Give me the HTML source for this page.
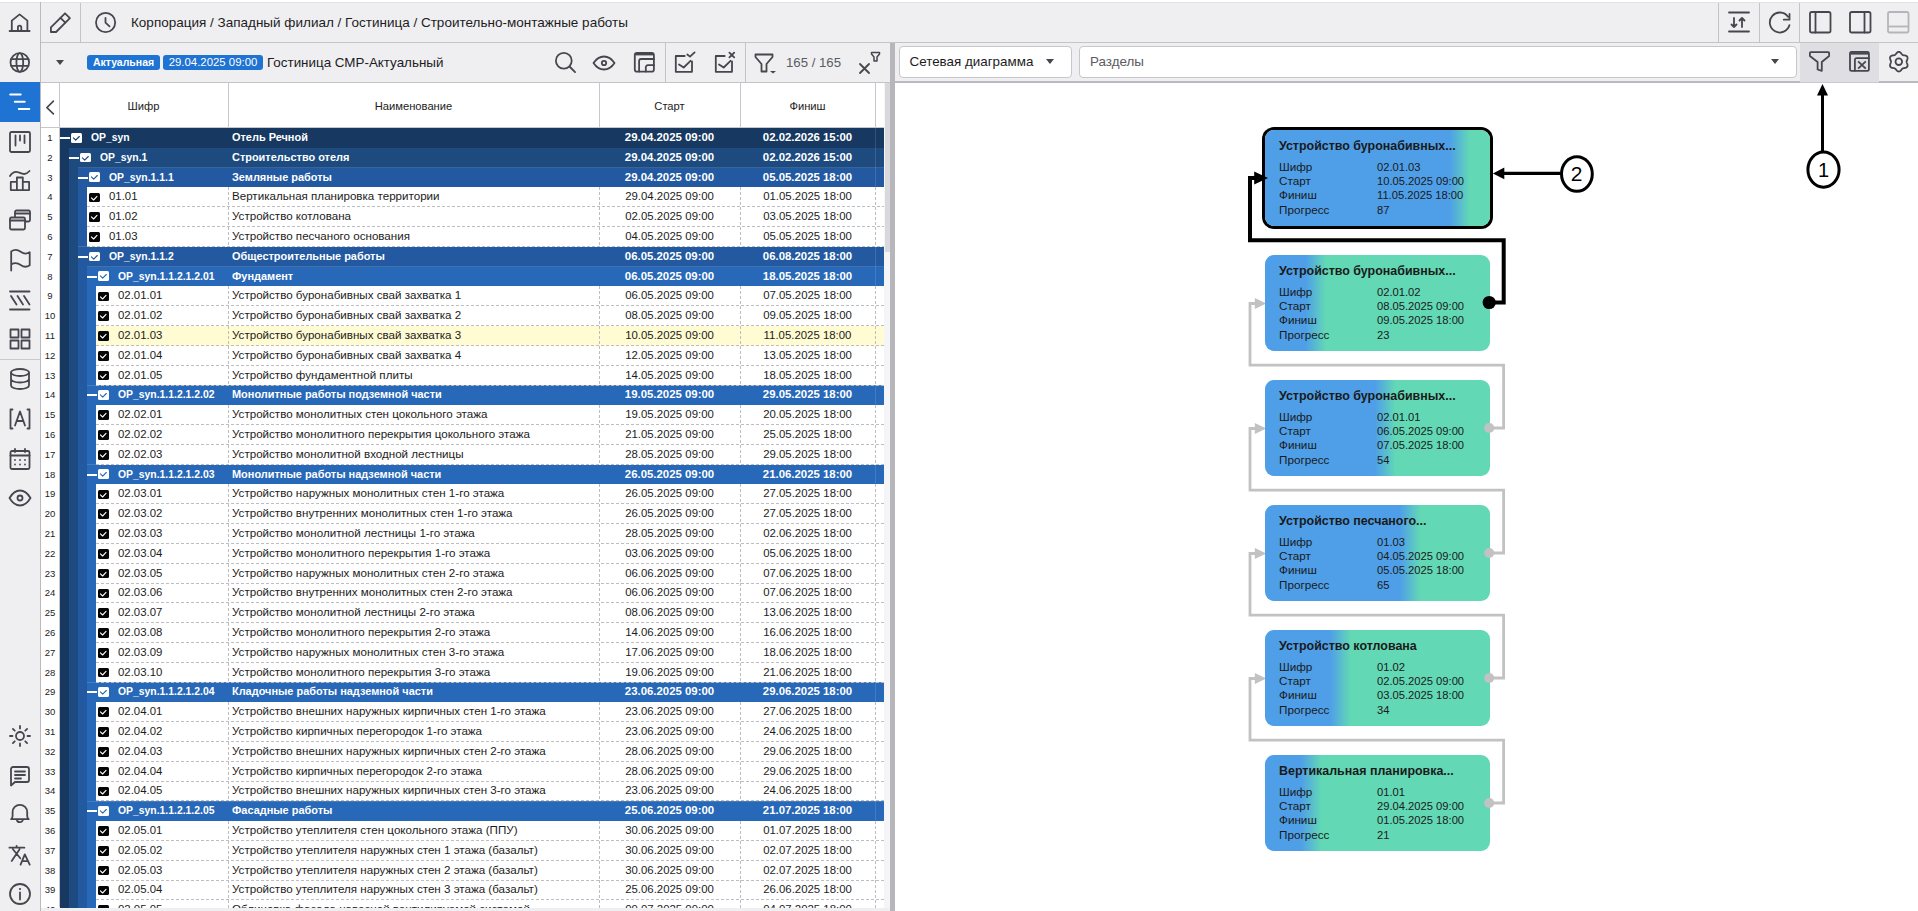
<!DOCTYPE html>
<html><head><meta charset="utf-8"><style>
*{box-sizing:border-box;margin:0;padding:0}
html,body{width:1918px;height:911px;overflow:hidden;background:#efeff2;font-family:"Liberation Sans",sans-serif;color:#1c1c22}
.a{position:absolute}
.si{position:absolute;left:7px;width:26px;height:26px}
.si svg{display:block}
.row{position:absolute;left:41px;width:843px;height:19.8px;white-space:nowrap;font-size:11.4px;line-height:19.8px}
.num{position:absolute;left:0;width:18px;height:100%;text-align:center;font-size:9.5px;color:#1c1c22;background:#fff}
.bar{position:absolute;top:0;height:100%}
.c{position:absolute;top:0;height:100%;overflow:hidden}
.g{color:#fff;font-weight:bold}
.dash-h{position:absolute;height:1px;background:repeating-linear-gradient(90deg,#bdbdc2 0 3px,transparent 3px 5px)}
.dash-v{position:absolute;width:1px;background:repeating-linear-gradient(180deg,#bdbdc2 0 3px,transparent 3px 5px)}
.cb{position:absolute;width:10.8px;height:9.8px;border-radius:1.5px}
.cb svg,.a svg{display:block}
.node{position:absolute;width:225px;height:96px;border-radius:9px;font-size:11.2px;color:#1a1a1a}
.node .t{position:absolute;left:14.5px;top:8.5px;font-weight:bold;font-size:12.45px;white-space:nowrap}
.node .k{position:absolute;left:14.5px;white-space:nowrap;font-size:11.7px;line-height:14px}
.node .v{position:absolute;left:112.5px;white-space:nowrap;line-height:14px}
</style></head><body>

<div class="a" style="left:0;top:0;width:1918px;height:2px;background:#fff"></div>
<div class="a" style="left:0;top:2px;width:1918px;height:1px;background:#e3e3e6"></div>
<div class="a" style="left:40px;top:2px;width:1px;height:909px;background:#b9b9be"></div>
<div class="a" style="left:0;top:82px;width:40px;height:40px;background:#1e73d3"></div>
<div class="a" style="left:0;top:359px;width:40px;height:1px;background:#c9c9ce"></div>
<div class="si" style="top:9px"><svg width="26" height="26" viewBox="0 0 26 26" ><path d="M2.6 22H22.6M4.8 22V11.6L12.6 5.4L20.4 11.6V22M10.9 22V18.3a1.7 1.7 0 0 1 3.4 0V22" fill="none" stroke="#46464e" stroke-width="1.8" stroke-linecap="round" stroke-linejoin="round"/></svg></div>
<div class="si" style="top:49px"><svg width="26" height="26" viewBox="0 0 26 26" ><circle cx="12.8" cy="13.5" r="9.3" fill="none" stroke="#46464e" stroke-width="1.8" stroke-linecap="round" stroke-linejoin="round"/><ellipse cx="12.8" cy="13.5" rx="3.4" ry="9.3" fill="none" stroke="#46464e" stroke-width="1.8" stroke-linecap="round" stroke-linejoin="round"/><path d="M4.2 10.2H21.4M4.2 16.8H21.4" fill="none" stroke="#46464e" stroke-width="1.8" stroke-linecap="round" stroke-linejoin="round"/></svg></div>
<div class="si" style="top:89px"><svg width="26" height="26" viewBox="0 0 26 26" ><path d="M3.2 5.6H13.7M7.8 12.8H17.7M11.8 20.1H22.3" fill="none" stroke="#ffffff" stroke-width="2" stroke-linecap="round"/></svg></div>
<div class="si" style="top:128.5px"><svg width="26" height="26" viewBox="0 0 26 26" ><rect x="3" y="3" width="20" height="20" rx="1.5" fill="none" stroke="#46464e" stroke-width="1.8" stroke-linecap="round" stroke-linejoin="round"/><path d="M8.5 6.5v10M13 6.5v5M17.5 6.5v7.5" fill="none" stroke="#46464e" stroke-width="1.8" stroke-linecap="round" stroke-linejoin="round"/></svg></div>
<div class="si" style="top:168px"><svg width="26" height="26" viewBox="0 0 26 26" ><path d="M3 8C5.5 4 8.5 3 12 4.5S18.5 7.5 22.5 3" fill="none" stroke="#46464e" stroke-width="1.8" stroke-linecap="round" stroke-linejoin="round"/><path d="M3.8 22.1V13.9h6.1v8.2zM9.9 22.1V9.5h5.9v12.6zM15.8 22.1V13.9h6.3v8.2z" fill="none" stroke="#46464e" stroke-width="1.8" stroke-linecap="round" stroke-linejoin="round"/></svg></div>
<div class="si" style="top:207px"><svg width="26" height="26" viewBox="0 0 26 26" ><rect x="8" y="3.5" width="15" height="11" rx="1.5" fill="none" stroke="#46464e" stroke-width="1.8" stroke-linecap="round" stroke-linejoin="round"/><path d="M8 6.5h15" fill="none" stroke="#46464e" stroke-width="1.8" stroke-linecap="round" stroke-linejoin="round"/><rect x="3" y="10.5" width="15" height="12" rx="1.5" fill="#efeff2" stroke="#46464e" stroke-width="1.8"/><path d="M3 13.5h15" fill="none" stroke="#46464e" stroke-width="1.8" stroke-linecap="round" stroke-linejoin="round"/></svg></div>
<div class="si" style="top:247px"><svg width="26" height="26" viewBox="0 0 26 26" ><path d="M4.2 23.5V4.5c3.5-2.5 7-1.5 9.5 0.3s6 2.5 9 0.5v13c-3 2-6.5 1.5-9-0.3S7.5 15.5 4.2 17.5" fill="none" stroke="#46464e" stroke-width="1.8" stroke-linecap="round" stroke-linejoin="round"/></svg></div>
<div class="si" style="top:286.5px"><svg width="26" height="26" viewBox="0 0 26 26" ><path d="M3 4.5h19.5M3 22.5h19.5M4 9l5.5 8.5M10.5 9l5.5 8.5M17 9l5.5 8.5" fill="none" stroke="#46464e" stroke-width="1.8" stroke-linecap="round" stroke-linejoin="round"/></svg></div>
<div class="si" style="top:326px"><svg width="26" height="26" viewBox="0 0 26 26" ><path d="M3.5 3.5h8v8h-8zM14.5 3.5h8v8h-8zM3.5 14.5h8v8h-8zM14.5 14.5h8v8h-8z" fill="none" stroke="#46464e" stroke-width="1.8" stroke-linecap="round" stroke-linejoin="round"/></svg></div>
<div class="si" style="top:366px"><svg width="26" height="26" viewBox="0 0 26 26" ><ellipse cx="13" cy="6.5" rx="9" ry="3.5" fill="none" stroke="#46464e" stroke-width="1.8" stroke-linecap="round" stroke-linejoin="round"/><path d="M4 6.5v13c0 2 4 3.5 9 3.5s9-1.5 9-3.5v-13M4 13c0 2 4 3.5 9 3.5s9-1.5 9-3.5" fill="none" stroke="#46464e" stroke-width="1.8" stroke-linecap="round" stroke-linejoin="round"/></svg></div>
<div class="si" style="top:406px"><svg width="26" height="26" viewBox="0 0 26 26" ><path d="M5.5 3.5h-2v19h2M20.5 3.5h2v19h-2M8 19.5l5-14 5 14M9.5 15h7" fill="none" stroke="#46464e" stroke-width="1.8" stroke-linecap="round" stroke-linejoin="round"/></svg></div>
<div class="si" style="top:445.5px"><svg width="26" height="26" viewBox="0 0 26 26" ><rect x="3.5" y="5" width="19" height="18" rx="1.5" fill="none" stroke="#46464e" stroke-width="1.8" stroke-linecap="round" stroke-linejoin="round"/><path d="M3.5 9.5h19M8 3v3M18 3v3" fill="none" stroke="#46464e" stroke-width="1.8" stroke-linecap="round" stroke-linejoin="round"/><g fill="#46464e"><circle cx="8" cy="14" r="0.9"/><circle cx="13" cy="14" r="0.9"/><circle cx="18" cy="14" r="0.9"/><circle cx="8" cy="18.5" r="0.9"/><circle cx="13" cy="18.5" r="0.9"/><circle cx="18" cy="18.5" r="0.9"/></g></svg></div>
<div class="si" style="top:485px"><svg width="26" height="26" viewBox="0 0 26 26" ><path d="M2.5 13c3-5 6.5-7.5 10.5-7.5s7.5 2.5 10.5 7.5c-3 5-6.5 7.5-10.5 7.5S5.5 18 2.5 13z" fill="none" stroke="#46464e" stroke-width="1.8" stroke-linecap="round" stroke-linejoin="round"/><circle cx="13" cy="13" r="2.5" fill="none" stroke="#46464e" stroke-width="1.8" stroke-linecap="round" stroke-linejoin="round"/></svg></div>
<div class="si" style="top:723px"><svg width="26" height="26" viewBox="0 0 26 26" ><circle cx="13" cy="13" r="4" fill="none" stroke="#46464e" stroke-width="1.8" stroke-linecap="round" stroke-linejoin="round"/><path d="M13 3v2.5M13 20.5V23M3 13h2.5M20.5 13H23M5.9 5.9l1.8 1.8M18.3 18.3l1.8 1.8M5.9 20.1l1.8-1.8M18.3 7.7l1.8-1.8" fill="none" stroke="#46464e" stroke-width="1.8" stroke-linecap="round" stroke-linejoin="round"/></svg></div>
<div class="si" style="top:762.5px"><svg width="26" height="26" viewBox="0 0 26 26" ><path d="M4 22.5V6a2 2 0 0 1 2-2h14a2 2 0 0 1 2 2v11a2 2 0 0 1-2 2H8z" fill="none" stroke="#46464e" stroke-width="1.8" stroke-linecap="round" stroke-linejoin="round"/><path d="M8 8.5h10M8 12h10M8 15.5h6" fill="none" stroke="#46464e" stroke-width="1.8" stroke-linecap="round" stroke-linejoin="round"/></svg></div>
<div class="si" style="top:802px"><svg width="26" height="26" viewBox="0 0 26 26" ><path d="M4.1 17.2H21.7c-1-0.8-1.5-2-1.5-3.5V10.1a7.3 7.3 0 0 0-14.6 0V13.7c0 1.5-0.5 2.7-1.5 3.5zM9.9 17.2a3 3 0 0 0 6 0" fill="none" stroke="#46464e" stroke-width="1.8" stroke-linecap="round" stroke-linejoin="round"/></svg></div>
<div class="si" style="top:841.5px"><svg width="26" height="26" viewBox="0 0 26 26" ><path d="M2.4 5.7H17.4M9.6 3.8V5.7M5.9 7.3L13.3 16.3M12.6 7.3L4.7 18.9M13.6 22.6L17.8 12.4L22.7 22.6M15.1 19.1H21.2" fill="none" stroke="#46464e" stroke-width="1.8" stroke-linecap="round" stroke-linejoin="round"/></svg></div>
<div class="si" style="top:880.5px"><svg width="26" height="26" viewBox="0 0 26 26" ><circle cx="13" cy="13" r="10" fill="none" stroke="#46464e" stroke-width="1.8" stroke-linecap="round" stroke-linejoin="round"/><path d="M13 11.5v7" fill="none" stroke="#46464e" stroke-width="1.8" stroke-linecap="round" stroke-linejoin="round"/><circle cx="13" cy="8" r="1.1" fill="#46464e"/></svg></div>
<div class="a" style="left:41px;top:42px;width:1877px;height:1px;background:#c3c3c8"></div>
<div class="a" style="left:80px;top:3px;width:1px;height:39px;background:#c3c3c8"></div>
<div class="a" style="left:1718px;top:3px;width:1px;height:39px;background:#c3c3c8"></div>
<div class="a" style="left:1759px;top:3px;width:1px;height:39px;background:#c3c3c8"></div>
<div class="a" style="left:1799px;top:3px;width:1px;height:39px;background:#c3c3c8"></div>
<div class="a" style="left:47px;top:9px"><svg width="26" height="26" viewBox="0 0 26 26" ><path d="M3.9 23V18.4L18 4.3L22.9 9.2L9.1 23z" fill="none" stroke="#46464e" stroke-width="1.8" stroke-linejoin="round"/><path d="M13.5 8.8L18.3 13.7" fill="none" stroke="#46464e" stroke-width="1.8" stroke-linecap="round" stroke-linejoin="round"/></svg></div>
<div class="a" style="left:93px;top:9px"><svg width="26" height="26" viewBox="0 0 26 26" ><circle cx="12.6" cy="13.5" r="9.6" fill="none" stroke="#46464e" stroke-width="1.8" stroke-linecap="round" stroke-linejoin="round"/><path d="M12.5 8.9V13.7L16.5 17.4" fill="none" stroke="#46464e" stroke-width="1.8" stroke-linecap="round" stroke-linejoin="round"/></svg></div>
<div class="a" style="left:131px;top:14px;font-size:13.5px;line-height:18px;white-space:nowrap;color:#1c1c22">Корпорация / Западный филиал / Гостиница / Строительно-монтажные работы</div>
<div class="a" style="left:1726px;top:9px"><svg width="26" height="26" viewBox="0 0 26 26" ><path d="M3 3.5h20M3 22.5h20M8 9v9M5.5 15.5L8 18l2.5-2.5M16 18V9M13.5 11.5L16 9l2.5 2.5" fill="none" stroke="#46464e" stroke-width="1.8" stroke-linecap="round" stroke-linejoin="round"/></svg></div>
<div class="a" style="left:1767px;top:9px"><svg width="26" height="26" viewBox="0 0 26 26" ><path d="M22.46 16.1A10 10 0 1 1 21 7.76M22.5 4.9V10.7H16.8" fill="none" stroke="#46464e" stroke-width="1.8" stroke-linecap="round" stroke-linejoin="round"/></svg></div>
<div class="a" style="left:1807px;top:9px"><svg width="26" height="26" viewBox="0 0 26 26" ><rect x="3" y="3" width="20.5" height="20.5" rx="1.8" fill="none" stroke="#46464e" stroke-width="1.8" stroke-linecap="round" stroke-linejoin="round"/><path d="M8.5 3v20.5" fill="none" stroke="#46464e" stroke-width="1.8" stroke-linecap="round" stroke-linejoin="round"/></svg></div>
<div class="a" style="left:1847px;top:9px"><svg width="26" height="26" viewBox="0 0 26 26" ><rect x="3" y="3" width="20.5" height="20.5" rx="1.8" fill="none" stroke="#46464e" stroke-width="1.8" stroke-linecap="round" stroke-linejoin="round"/><path d="M17.5 3v20.5" fill="none" stroke="#46464e" stroke-width="1.8" stroke-linecap="round" stroke-linejoin="round"/></svg></div>
<div class="a" style="left:1885px;top:9px"><svg width="26" height="26" viewBox="0 0 26 26" ><rect x="3" y="3" width="20.5" height="20.5" rx="1.8" fill="none" stroke="#b4b4ba" stroke-width="1.8"/><path d="M3 17.5h20.5" fill="none" stroke="#b4b4ba" stroke-width="1.8"/></svg></div>
<div class="a" style="left:41px;top:82px;width:849px;height:1px;background:#c3c3c8"></div>
<div class="a" style="left:56px;top:60px;width:0;height:0;border-left:4.7px solid transparent;border-right:4.7px solid transparent;border-top:5px solid #46464e"></div>
<div class="a" style="left:87px;top:55px;width:73px;height:15px;border-radius:3px;background:#1e73d3;color:#fff;font-weight:bold;font-size:10.5px;line-height:15px;text-align:center">Актуальная</div>
<div class="a" style="left:163px;top:55px;width:100px;height:15px;border-radius:3px;background:#1e73d3;color:#fff;font-size:11.4px;line-height:15px;text-align:center">29.04.2025 09:00</div>
<div class="a" style="left:267px;top:54px;font-size:13.4px;line-height:18px;white-space:nowrap">Гостиница СМР-Актуальный</div>
<div class="a" style="left:551px;top:49px"><svg width="26" height="26" viewBox="0 0 26 26" ><circle cx="12.8" cy="11.8" r="7.9" fill="none" stroke="#46464e" stroke-width="1.8" stroke-linecap="round" stroke-linejoin="round"/><path d="M18.5 17.5l5.6 5.6" fill="none" stroke="#46464e" stroke-width="1.8" stroke-linecap="round" stroke-linejoin="round"/></svg></div>
<div class="a" style="left:591px;top:50px"><svg width="26" height="26" viewBox="0 0 26 26" ><path d="M2.5 13c3-4.5 6.5-6.5 10.5-6.5s7.5 2 10.5 6.5c-3 4.5-6.5 6.5-10.5 6.5S5.5 17.5 2.5 13z" fill="none" stroke="#46464e" stroke-width="1.8" stroke-linecap="round" stroke-linejoin="round"/><circle cx="13" cy="13" r="2.2" fill="none" stroke="#46464e" stroke-width="1.8" stroke-linecap="round" stroke-linejoin="round"/></svg></div>
<div class="a" style="left:631px;top:50px"><svg width="26" height="26" viewBox="0 0 26 26" ><rect x="3.8" y="3" width="19.1" height="18.6" rx="2.2" fill="none" stroke="#46464e" stroke-width="1.8" stroke-linecap="round" stroke-linejoin="round"/><path d="M4.5 4.4H22.2" fill="none" stroke="#46464e" stroke-width="2"/><path d="M8.1 21.6V11a2 2 0 0 1 2-2H22.9M14.8 21.6V17.2a2 2 0 0 1 2-2H22.9" fill="none" stroke="#46464e" stroke-width="1.8" stroke-linecap="round" stroke-linejoin="round"/></svg></div>
<div class="a" style="left:665px;top:43px;width:1px;height:39px;background:#c3c3c8"></div>
<div class="a" style="left:671px;top:49px"><svg width="26" height="26" viewBox="0 0 26 26" ><path d="M21 12.3V22.8H4.8V7H13.7M8 15.4l4.7 3.1 6.8-6.7M16.3 5.5l2.7 2.1 4.6-4.2" fill="none" stroke="#46464e" stroke-width="1.8" stroke-linecap="round" stroke-linejoin="round"/></svg></div>
<div class="a" style="left:711px;top:49px"><svg width="26" height="26" viewBox="0 0 26 26" ><path d="M21 12.3V22.8H4.8V7H13.7M8 15.4l4.7 3.1 6.8-6.7M18.4 3.6l4.8 4.8M23.2 3.6l-4.8 4.8" fill="none" stroke="#46464e" stroke-width="1.8" stroke-linecap="round" stroke-linejoin="round"/></svg></div>
<div class="a" style="left:745px;top:43px;width:1px;height:39px;background:#c3c3c8"></div>
<div class="a" style="left:752px;top:50px"><svg width="26" height="26" viewBox="0 0 26 26" ><path d="M3.5 4.5h17v2.5l-6 7v7.5h-5v-7.5l-6-7z" fill="none" stroke="#46464e" stroke-width="1.8" stroke-linecap="round" stroke-linejoin="round"/><path d="M18 21h6l-3 2.5z" fill="#46464e"/></svg></div>
<div class="a" style="left:786px;top:54px;font-size:13.2px;line-height:18px;color:#5b5b62;white-space:nowrap">165 / 165</div>
<div class="a" style="left:856px;top:49px"><svg width="28" height="28" viewBox="0 0 28 28" ><path d="M4 15l9 9M13 15l-9 9" fill="none" stroke="#46464e" stroke-width="1.8" stroke-linecap="round" stroke-linejoin="round"/><path d="M15.5 3.5h8v1.5l-2.5 3v4h-3v-4l-2.5-3z" fill="none" stroke="#46464e" stroke-width="1.5" stroke-linejoin="round"/></svg></div>
<div class="a" style="left:890px;top:43px;width:5px;height:868px;background:#b6b6bb"></div>
<div class="a" style="left:884px;top:83px;width:6px;height:828px;background:#f5f5f7"></div>
<div class="a" style="left:884.5px;top:83px;width:5.5px;height:169px;background:#d9d9dd"></div>
<div class="a" style="left:895px;top:81px;width:1023px;height:2px;background:#b9b9be"></div>
<div class="a" style="left:899px;top:46px;width:173px;height:31.6px;border:1px solid #c6c6cb;border-radius:4px;background:#fff"></div>
<div class="a" style="left:909.5px;top:52.5px;font-size:13.4px;line-height:18px;white-space:nowrap">Сетевая диаграмма</div>
<div class="a" style="left:1046px;top:59px;width:0;height:0;border-left:4.7px solid transparent;border-right:4.7px solid transparent;border-top:5px solid #46464e"></div>
<div class="a" style="left:1079px;top:46px;width:717.5px;height:31.6px;border:1px solid #c6c6cb;border-radius:4px;background:#fff"></div>
<div class="a" style="left:1090px;top:52.5px;font-size:13.4px;line-height:18px;white-space:nowrap;color:#5b5b62">Разделы</div>
<div class="a" style="left:1771px;top:59px;width:0;height:0;border-left:4.7px solid transparent;border-right:4.7px solid transparent;border-top:5px solid #46464e"></div>
<div class="a" style="left:1800px;top:43px;width:79px;height:40px;background:#dfdfe3"></div>
<div class="a" style="left:1800px;top:82px;width:79px;height:1px;background:#c9c9ce"></div>
<div class="a" style="left:1807px;top:49px"><svg width="26" height="26" viewBox="0 0 26 26" ><path d="M3.7 3.2H21.3a0.8 0.8 0 0 1 0.8 0.8V7L14.8 13V21.8L10.6 20.5V13L2.9 7V4a0.8 0.8 0 0 1 0.8-0.8z" fill="none" stroke="#46464e" stroke-width="1.8" stroke-linecap="round" stroke-linejoin="round"/></svg></div>
<div class="a" style="left:1847px;top:49px"><svg width="26" height="26" viewBox="0 0 26 26" ><rect x="3" y="2.9" width="18.9" height="18.9" rx="1.6" fill="none" stroke="#46464e" stroke-width="1.8" stroke-linecap="round" stroke-linejoin="round"/><path d="M3.8 4.4H21.1" fill="none" stroke="#46464e" stroke-width="2.4"/><path d="M7.9 21.8V10.7a1.5 1.5 0 0 1 1.5-1.5H21.9" fill="none" stroke="#46464e" stroke-width="1.8" stroke-linecap="round" stroke-linejoin="round"/><path d="M11.1 12.4L18.8 19.7M18.8 12.4L11.1 19.7" fill="none" stroke="#46464e" stroke-width="1.8" stroke-linecap="butt"/></svg></div>
<div class="a" style="left:1885px;top:49px"><svg width="26" height="26" viewBox="0 0 26 26" ><path d="M21.60 12.70 L21.64 13.11 L21.75 13.54 L21.91 13.98 L22.11 14.47 L22.30 14.98 L22.46 15.51 L22.56 16.06 L22.58 16.61 L22.49 17.13 L22.29 17.60 L21.98 18.01 L21.57 18.35 L21.10 18.61 L20.57 18.80 L20.02 18.92 L19.48 19.01 L18.97 19.08 L18.50 19.16 L18.07 19.28 L17.70 19.45 L17.36 19.69 L17.05 20.00 L16.74 20.37 L16.42 20.78 L16.08 21.20 L15.69 21.61 L15.27 21.97 L14.80 22.26 L14.31 22.44 L13.80 22.50 L13.29 22.44 L12.80 22.26 L12.33 21.97 L11.91 21.61 L11.52 21.20 L11.18 20.78 L10.86 20.37 L10.55 20.00 L10.24 19.69 L9.90 19.45 L9.53 19.28 L9.10 19.16 L8.63 19.08 L8.12 19.01 L7.58 18.92 L7.03 18.80 L6.50 18.61 L6.03 18.35 L5.62 18.01 L5.31 17.60 L5.11 17.13 L5.02 16.61 L5.04 16.06 L5.14 15.51 L5.30 14.98 L5.49 14.47 L5.69 13.98 L5.85 13.54 L5.96 13.11 L6.00 12.70 L5.96 12.29 L5.85 11.86 L5.69 11.42 L5.49 10.93 L5.30 10.42 L5.14 9.89 L5.04 9.34 L5.02 8.79 L5.11 8.27 L5.31 7.80 L5.62 7.39 L6.03 7.05 L6.50 6.79 L7.03 6.60 L7.58 6.48 L8.12 6.39 L8.63 6.32 L9.10 6.24 L9.53 6.12 L9.90 5.95 L10.24 5.71 L10.55 5.40 L10.86 5.03 L11.18 4.62 L11.52 4.20 L11.91 3.79 L12.33 3.43 L12.80 3.14 L13.29 2.96 L13.80 2.90 L14.31 2.96 L14.80 3.14 L15.27 3.43 L15.69 3.79 L16.08 4.20 L16.42 4.62 L16.74 5.03 L17.05 5.40 L17.36 5.71 L17.70 5.95 L18.07 6.12 L18.50 6.24 L18.97 6.32 L19.48 6.39 L20.02 6.48 L20.57 6.60 L21.10 6.79 L21.57 7.05 L21.98 7.39 L22.29 7.80 L22.49 8.27 L22.58 8.79 L22.56 9.34 L22.46 9.89 L22.30 10.42 L22.11 10.93 L21.91 11.42 L21.75 11.86 L21.64 12.29z" fill="none" stroke="#46464e" stroke-width="1.8" stroke-linecap="round" stroke-linejoin="round"/><circle cx="13.8" cy="12.7" r="3.3" fill="none" stroke="#46464e" stroke-width="1.8" stroke-linecap="round" stroke-linejoin="round"/></svg></div>
<div class="a" style="left:41px;top:83px;width:843px;height:44px;background:#fff"></div>
<div class="a" style="left:41px;top:127px;width:843px;height:1px;background:#c6c6cb"></div>
<div class="a" style="left:59px;top:83px;width:1px;height:44px;background:#c6c6cb"></div>
<div class="a" style="left:228px;top:83px;width:1px;height:44px;background:#c6c6cb"></div>
<div class="a" style="left:599px;top:83px;width:1px;height:44px;background:#c6c6cb"></div>
<div class="a" style="left:740px;top:83px;width:1px;height:44px;background:#c6c6cb"></div>
<div class="a" style="left:875px;top:83px;width:1px;height:44px;background:#c6c6cb"></div>
<div class="a" style="left:44px;top:96.5px"><svg width="14" height="20" viewBox="0 0 14 20" ><path d="M9.4 4.1L2.9 10.6 9.4 16.9" fill="none" stroke="#46464e" stroke-width="1.6" stroke-linecap="round" stroke-linejoin="round"/></svg></div>
<div class="a" style="left:59px;top:97px;width:169px;text-align:center;font-size:11.2px;line-height:18px">Шифр</div>
<div class="a" style="left:228px;top:97px;width:371px;text-align:center;font-size:11.2px;line-height:18px">Наименование</div>
<div class="a" style="left:599px;top:97px;width:141px;text-align:center;font-size:11.2px;line-height:18px">Старт</div>
<div class="a" style="left:740px;top:97px;width:135px;text-align:center;font-size:11.2px;line-height:18px">Финиш</div>
<div class="a" style="left:41px;top:128px;width:18px;height:779px;background:#fff"></div>
<div class="a" style="left:59px;top:128px;width:1px;height:779px;background:#c6c6cb"></div>
<div class="row" style="top:128.00px"><div class="num">1</div><div class="bar" style="left:19px;width:824px;background:#173961"></div><div class="a" style="left:834px;top:0;width:1px;height:100%;background:rgba(255,255,255,0.13)"></div><div class="a" style="left:19px;top:9px;width:10px;height:2px;background:#fff"></div><div class="cb" style="left:30px;top:4.9px;background:#fff"><svg width="11" height="10" viewBox="0 0 11 10" ><path d="M2.4 4.9l2.3 2.3 3.6-3.7" fill="none" stroke="#173961" stroke-width="1.1" stroke-linecap="round" stroke-linejoin="round"/></svg></div><div class="c g" style="left:50px;width:137px;font-size:10.4px">OP_syn</div><div class="c g" style="left:191px;width:370px;font-size:10.95px">Отель Речной</div><div class="c g" style="left:558px;width:141px;text-align:center;font-size:11.4px">29.04.2025 09:00</div><div class="c g" style="left:699px;width:135px;text-align:center;font-size:11.4px">02.02.2026 15:00</div></div>
<div class="row" style="top:147.80px"><div class="num">2</div><div class="bar" style="left:19px;width:9px;background:#173961"></div><div class="bar" style="left:28px;width:815px;background:#1d4b80"></div><div class="a" style="left:834px;top:0;width:1px;height:100%;background:rgba(255,255,255,0.13)"></div><div class="a" style="left:28px;top:9px;width:10px;height:2px;background:#fff"></div><div class="cb" style="left:39px;top:4.9px;background:#fff"><svg width="11" height="10" viewBox="0 0 11 10" ><path d="M2.4 4.9l2.3 2.3 3.6-3.7" fill="none" stroke="#1d4b80" stroke-width="1.1" stroke-linecap="round" stroke-linejoin="round"/></svg></div><div class="c g" style="left:59px;width:128px;font-size:10.4px">OP_syn.1</div><div class="c g" style="left:191px;width:370px;font-size:10.95px">Строительство отеля</div><div class="c g" style="left:558px;width:141px;text-align:center;font-size:11.4px">29.04.2025 09:00</div><div class="c g" style="left:699px;width:135px;text-align:center;font-size:11.4px">02.02.2026 15:00</div></div>
<div class="row" style="top:167.60px"><div class="num">3</div><div class="bar" style="left:19px;width:9px;background:#173961"></div><div class="bar" style="left:28px;width:9px;background:#1d4b80"></div><div class="bar" style="left:37px;width:806px;background:#2259a0"></div><div class="a" style="left:37px;top:-0.5px;width:806px;height:1px;background:rgba(255,255,255,0.14)"></div><div class="a" style="left:834px;top:0;width:1px;height:100%;background:rgba(255,255,255,0.13)"></div><div class="a" style="left:37px;top:9px;width:10px;height:2px;background:#fff"></div><div class="cb" style="left:48px;top:4.9px;background:#fff"><svg width="11" height="10" viewBox="0 0 11 10" ><path d="M2.4 4.9l2.3 2.3 3.6-3.7" fill="none" stroke="#2259a0" stroke-width="1.1" stroke-linecap="round" stroke-linejoin="round"/></svg></div><div class="c g" style="left:68px;width:119px;font-size:10.4px">OP_syn.1.1.1</div><div class="c g" style="left:191px;width:370px;font-size:10.95px">Земляные работы</div><div class="c g" style="left:558px;width:141px;text-align:center;font-size:11.4px">29.04.2025 09:00</div><div class="c g" style="left:699px;width:135px;text-align:center;font-size:11.4px">05.05.2025 18:00</div></div>
<div class="row" style="top:187.40px"><div class="num">4</div><div class="bar" style="left:19px;width:9px;background:#173961"></div><div class="bar" style="left:28px;width:9px;background:#1d4b80"></div><div class="bar" style="left:37px;width:9px;background:#2259a0"></div><div class="bar" style="left:46px;width:797px;background:#fff"></div><div class="dash-v" style="left:187px;top:0;height:19.8px"></div><div class="dash-v" style="left:558px;top:0;height:19.8px"></div><div class="dash-v" style="left:699px;top:0;height:19.8px"></div><div class="dash-v" style="left:834px;top:0;height:19.8px"></div><div class="cb" style="left:48px;top:5.3px;height:9.5px;background:#050505"><svg width="11" height="10" viewBox="0 0 11 10" ><path d="M2.4 4.8l2.2 2.2 3.4-3.6" fill="none" stroke="#fff" stroke-width="1.1" stroke-linecap="round" stroke-linejoin="round"/></svg></div><div class="c" style="left:68px;width:119px">01.01</div><div class="c" style="left:191px;top:-1px;width:370px;font-size:11.6px">Вертикальная планировка территории</div><div class="c" style="left:558px;width:141px;text-align:center">29.04.2025 09:00</div><div class="c" style="left:699px;width:135px;text-align:center">01.05.2025 18:00</div></div>
<div class="row" style="top:207.20px"><div class="num">5</div><div class="bar" style="left:19px;width:9px;background:#173961"></div><div class="bar" style="left:28px;width:9px;background:#1d4b80"></div><div class="bar" style="left:37px;width:9px;background:#2259a0"></div><div class="bar" style="left:46px;width:797px;background:#fff"></div><div class="dash-v" style="left:187px;top:0;height:19.8px"></div><div class="dash-v" style="left:558px;top:0;height:19.8px"></div><div class="dash-v" style="left:699px;top:0;height:19.8px"></div><div class="dash-v" style="left:834px;top:0;height:19.8px"></div><div class="cb" style="left:48px;top:5.3px;height:9.5px;background:#050505"><svg width="11" height="10" viewBox="0 0 11 10" ><path d="M2.4 4.8l2.2 2.2 3.4-3.6" fill="none" stroke="#fff" stroke-width="1.1" stroke-linecap="round" stroke-linejoin="round"/></svg></div><div class="c" style="left:68px;width:119px">01.02</div><div class="c" style="left:191px;top:-1px;width:370px;font-size:11.6px">Устройство котлована</div><div class="c" style="left:558px;width:141px;text-align:center">02.05.2025 09:00</div><div class="c" style="left:699px;width:135px;text-align:center">03.05.2025 18:00</div></div>
<div class="row" style="top:227.00px"><div class="num">6</div><div class="bar" style="left:19px;width:9px;background:#173961"></div><div class="bar" style="left:28px;width:9px;background:#1d4b80"></div><div class="bar" style="left:37px;width:9px;background:#2259a0"></div><div class="bar" style="left:46px;width:797px;background:#fff"></div><div class="dash-v" style="left:187px;top:0;height:19.8px"></div><div class="dash-v" style="left:558px;top:0;height:19.8px"></div><div class="dash-v" style="left:699px;top:0;height:19.8px"></div><div class="dash-v" style="left:834px;top:0;height:19.8px"></div><div class="cb" style="left:48px;top:5.3px;height:9.5px;background:#050505"><svg width="11" height="10" viewBox="0 0 11 10" ><path d="M2.4 4.8l2.2 2.2 3.4-3.6" fill="none" stroke="#fff" stroke-width="1.1" stroke-linecap="round" stroke-linejoin="round"/></svg></div><div class="c" style="left:68px;width:119px">01.03</div><div class="c" style="left:191px;top:-1px;width:370px;font-size:11.6px">Устройство песчаного основания</div><div class="c" style="left:558px;width:141px;text-align:center">04.05.2025 09:00</div><div class="c" style="left:699px;width:135px;text-align:center">05.05.2025 18:00</div></div>
<div class="row" style="top:246.80px"><div class="num">7</div><div class="bar" style="left:19px;width:9px;background:#173961"></div><div class="bar" style="left:28px;width:9px;background:#1d4b80"></div><div class="bar" style="left:37px;width:806px;background:#2259a0"></div><div class="a" style="left:37px;top:-0.5px;width:806px;height:1px;background:rgba(255,255,255,0.14)"></div><div class="a" style="left:834px;top:0;width:1px;height:100%;background:rgba(255,255,255,0.13)"></div><div class="a" style="left:37px;top:9px;width:10px;height:2px;background:#fff"></div><div class="cb" style="left:48px;top:4.9px;background:#fff"><svg width="11" height="10" viewBox="0 0 11 10" ><path d="M2.4 4.9l2.3 2.3 3.6-3.7" fill="none" stroke="#2259a0" stroke-width="1.1" stroke-linecap="round" stroke-linejoin="round"/></svg></div><div class="c g" style="left:68px;width:119px;font-size:10.4px">OP_syn.1.1.2</div><div class="c g" style="left:191px;width:370px;font-size:10.95px">Общестроительные работы</div><div class="c g" style="left:558px;width:141px;text-align:center;font-size:11.4px">06.05.2025 09:00</div><div class="c g" style="left:699px;width:135px;text-align:center;font-size:11.4px">06.08.2025 18:00</div></div>
<div class="row" style="top:266.60px"><div class="num">8</div><div class="bar" style="left:19px;width:9px;background:#173961"></div><div class="bar" style="left:28px;width:9px;background:#1d4b80"></div><div class="bar" style="left:37px;width:9px;background:#2259a0"></div><div class="bar" style="left:46px;width:797px;background:#2768b8"></div><div class="a" style="left:46px;top:-0.5px;width:797px;height:1px;background:rgba(255,255,255,0.14)"></div><div class="a" style="left:834px;top:0;width:1px;height:100%;background:rgba(255,255,255,0.13)"></div><div class="a" style="left:46px;top:9px;width:10px;height:2px;background:#fff"></div><div class="cb" style="left:57px;top:4.9px;background:#fff"><svg width="11" height="10" viewBox="0 0 11 10" ><path d="M2.4 4.9l2.3 2.3 3.6-3.7" fill="none" stroke="#2768b8" stroke-width="1.1" stroke-linecap="round" stroke-linejoin="round"/></svg></div><div class="c g" style="left:77px;width:110px;font-size:10.4px">OP_syn.1.1.2.1.2.01</div><div class="c g" style="left:191px;width:370px;font-size:10.95px">Фундамент</div><div class="c g" style="left:558px;width:141px;text-align:center;font-size:11.4px">06.05.2025 09:00</div><div class="c g" style="left:699px;width:135px;text-align:center;font-size:11.4px">18.05.2025 18:00</div></div>
<div class="row" style="top:286.40px"><div class="num">9</div><div class="bar" style="left:19px;width:9px;background:#173961"></div><div class="bar" style="left:28px;width:9px;background:#1d4b80"></div><div class="bar" style="left:37px;width:9px;background:#2259a0"></div><div class="bar" style="left:46px;width:9px;background:#2768b8"></div><div class="bar" style="left:55px;width:788px;background:#fff"></div><div class="dash-v" style="left:187px;top:0;height:19.8px"></div><div class="dash-v" style="left:558px;top:0;height:19.8px"></div><div class="dash-v" style="left:699px;top:0;height:19.8px"></div><div class="dash-v" style="left:834px;top:0;height:19.8px"></div><div class="cb" style="left:57px;top:5.3px;height:9.5px;background:#050505"><svg width="11" height="10" viewBox="0 0 11 10" ><path d="M2.4 4.8l2.2 2.2 3.4-3.6" fill="none" stroke="#fff" stroke-width="1.1" stroke-linecap="round" stroke-linejoin="round"/></svg></div><div class="c" style="left:77px;width:110px">02.01.01</div><div class="c" style="left:191px;top:-1px;width:370px;font-size:11.6px">Устройство буронабивных свай захватка 1</div><div class="c" style="left:558px;width:141px;text-align:center">06.05.2025 09:00</div><div class="c" style="left:699px;width:135px;text-align:center">07.05.2025 18:00</div></div>
<div class="row" style="top:306.20px"><div class="num">10</div><div class="bar" style="left:19px;width:9px;background:#173961"></div><div class="bar" style="left:28px;width:9px;background:#1d4b80"></div><div class="bar" style="left:37px;width:9px;background:#2259a0"></div><div class="bar" style="left:46px;width:9px;background:#2768b8"></div><div class="bar" style="left:55px;width:788px;background:#fff"></div><div class="dash-v" style="left:187px;top:0;height:19.8px"></div><div class="dash-v" style="left:558px;top:0;height:19.8px"></div><div class="dash-v" style="left:699px;top:0;height:19.8px"></div><div class="dash-v" style="left:834px;top:0;height:19.8px"></div><div class="cb" style="left:57px;top:5.3px;height:9.5px;background:#050505"><svg width="11" height="10" viewBox="0 0 11 10" ><path d="M2.4 4.8l2.2 2.2 3.4-3.6" fill="none" stroke="#fff" stroke-width="1.1" stroke-linecap="round" stroke-linejoin="round"/></svg></div><div class="c" style="left:77px;width:110px">02.01.02</div><div class="c" style="left:191px;top:-1px;width:370px;font-size:11.6px">Устройство буронабивных свай захватка 2</div><div class="c" style="left:558px;width:141px;text-align:center">08.05.2025 09:00</div><div class="c" style="left:699px;width:135px;text-align:center">09.05.2025 18:00</div></div>
<div class="row" style="top:326.00px"><div class="num">11</div><div class="bar" style="left:19px;width:9px;background:#173961"></div><div class="bar" style="left:28px;width:9px;background:#1d4b80"></div><div class="bar" style="left:37px;width:9px;background:#2259a0"></div><div class="bar" style="left:46px;width:9px;background:#2768b8"></div><div class="bar" style="left:55px;width:788px;background:#fffbd2"></div><div class="dash-v" style="left:187px;top:0;height:19.8px"></div><div class="dash-v" style="left:558px;top:0;height:19.8px"></div><div class="dash-v" style="left:699px;top:0;height:19.8px"></div><div class="dash-v" style="left:834px;top:0;height:19.8px"></div><div class="cb" style="left:57px;top:5.3px;height:9.5px;background:#050505"><svg width="11" height="10" viewBox="0 0 11 10" ><path d="M2.4 4.8l2.2 2.2 3.4-3.6" fill="none" stroke="#fff" stroke-width="1.1" stroke-linecap="round" stroke-linejoin="round"/></svg></div><div class="c" style="left:77px;width:110px">02.01.03</div><div class="c" style="left:191px;top:-1px;width:370px;font-size:11.6px">Устройство буронабивных свай захватка 3</div><div class="c" style="left:558px;width:141px;text-align:center">10.05.2025 09:00</div><div class="c" style="left:699px;width:135px;text-align:center">11.05.2025 18:00</div></div>
<div class="row" style="top:345.80px"><div class="num">12</div><div class="bar" style="left:19px;width:9px;background:#173961"></div><div class="bar" style="left:28px;width:9px;background:#1d4b80"></div><div class="bar" style="left:37px;width:9px;background:#2259a0"></div><div class="bar" style="left:46px;width:9px;background:#2768b8"></div><div class="bar" style="left:55px;width:788px;background:#fff"></div><div class="dash-v" style="left:187px;top:0;height:19.8px"></div><div class="dash-v" style="left:558px;top:0;height:19.8px"></div><div class="dash-v" style="left:699px;top:0;height:19.8px"></div><div class="dash-v" style="left:834px;top:0;height:19.8px"></div><div class="cb" style="left:57px;top:5.3px;height:9.5px;background:#050505"><svg width="11" height="10" viewBox="0 0 11 10" ><path d="M2.4 4.8l2.2 2.2 3.4-3.6" fill="none" stroke="#fff" stroke-width="1.1" stroke-linecap="round" stroke-linejoin="round"/></svg></div><div class="c" style="left:77px;width:110px">02.01.04</div><div class="c" style="left:191px;top:-1px;width:370px;font-size:11.6px">Устройство буронабивных свай захватка 4</div><div class="c" style="left:558px;width:141px;text-align:center">12.05.2025 09:00</div><div class="c" style="left:699px;width:135px;text-align:center">13.05.2025 18:00</div></div>
<div class="row" style="top:365.60px"><div class="num">13</div><div class="bar" style="left:19px;width:9px;background:#173961"></div><div class="bar" style="left:28px;width:9px;background:#1d4b80"></div><div class="bar" style="left:37px;width:9px;background:#2259a0"></div><div class="bar" style="left:46px;width:9px;background:#2768b8"></div><div class="bar" style="left:55px;width:788px;background:#fff"></div><div class="dash-v" style="left:187px;top:0;height:19.8px"></div><div class="dash-v" style="left:558px;top:0;height:19.8px"></div><div class="dash-v" style="left:699px;top:0;height:19.8px"></div><div class="dash-v" style="left:834px;top:0;height:19.8px"></div><div class="cb" style="left:57px;top:5.3px;height:9.5px;background:#050505"><svg width="11" height="10" viewBox="0 0 11 10" ><path d="M2.4 4.8l2.2 2.2 3.4-3.6" fill="none" stroke="#fff" stroke-width="1.1" stroke-linecap="round" stroke-linejoin="round"/></svg></div><div class="c" style="left:77px;width:110px">02.01.05</div><div class="c" style="left:191px;top:-1px;width:370px;font-size:11.6px">Устройство фундаментной плиты</div><div class="c" style="left:558px;width:141px;text-align:center">14.05.2025 09:00</div><div class="c" style="left:699px;width:135px;text-align:center">18.05.2025 18:00</div></div>
<div class="row" style="top:385.40px"><div class="num">14</div><div class="bar" style="left:19px;width:9px;background:#173961"></div><div class="bar" style="left:28px;width:9px;background:#1d4b80"></div><div class="bar" style="left:37px;width:9px;background:#2259a0"></div><div class="bar" style="left:46px;width:797px;background:#2768b8"></div><div class="a" style="left:46px;top:-0.5px;width:797px;height:1px;background:rgba(255,255,255,0.14)"></div><div class="a" style="left:834px;top:0;width:1px;height:100%;background:rgba(255,255,255,0.13)"></div><div class="a" style="left:46px;top:9px;width:10px;height:2px;background:#fff"></div><div class="cb" style="left:57px;top:4.9px;background:#fff"><svg width="11" height="10" viewBox="0 0 11 10" ><path d="M2.4 4.9l2.3 2.3 3.6-3.7" fill="none" stroke="#2768b8" stroke-width="1.1" stroke-linecap="round" stroke-linejoin="round"/></svg></div><div class="c g" style="left:77px;width:110px;font-size:10.4px">OP_syn.1.1.2.1.2.02</div><div class="c g" style="left:191px;width:370px;font-size:10.95px">Монолитные работы подземной части</div><div class="c g" style="left:558px;width:141px;text-align:center;font-size:11.4px">19.05.2025 09:00</div><div class="c g" style="left:699px;width:135px;text-align:center;font-size:11.4px">29.05.2025 18:00</div></div>
<div class="row" style="top:405.20px"><div class="num">15</div><div class="bar" style="left:19px;width:9px;background:#173961"></div><div class="bar" style="left:28px;width:9px;background:#1d4b80"></div><div class="bar" style="left:37px;width:9px;background:#2259a0"></div><div class="bar" style="left:46px;width:9px;background:#2768b8"></div><div class="bar" style="left:55px;width:788px;background:#fff"></div><div class="dash-v" style="left:187px;top:0;height:19.8px"></div><div class="dash-v" style="left:558px;top:0;height:19.8px"></div><div class="dash-v" style="left:699px;top:0;height:19.8px"></div><div class="dash-v" style="left:834px;top:0;height:19.8px"></div><div class="cb" style="left:57px;top:5.3px;height:9.5px;background:#050505"><svg width="11" height="10" viewBox="0 0 11 10" ><path d="M2.4 4.8l2.2 2.2 3.4-3.6" fill="none" stroke="#fff" stroke-width="1.1" stroke-linecap="round" stroke-linejoin="round"/></svg></div><div class="c" style="left:77px;width:110px">02.02.01</div><div class="c" style="left:191px;top:-1px;width:370px;font-size:11.6px">Устройство монолитных стен цокольного этажа</div><div class="c" style="left:558px;width:141px;text-align:center">19.05.2025 09:00</div><div class="c" style="left:699px;width:135px;text-align:center">20.05.2025 18:00</div></div>
<div class="row" style="top:425.00px"><div class="num">16</div><div class="bar" style="left:19px;width:9px;background:#173961"></div><div class="bar" style="left:28px;width:9px;background:#1d4b80"></div><div class="bar" style="left:37px;width:9px;background:#2259a0"></div><div class="bar" style="left:46px;width:9px;background:#2768b8"></div><div class="bar" style="left:55px;width:788px;background:#fff"></div><div class="dash-v" style="left:187px;top:0;height:19.8px"></div><div class="dash-v" style="left:558px;top:0;height:19.8px"></div><div class="dash-v" style="left:699px;top:0;height:19.8px"></div><div class="dash-v" style="left:834px;top:0;height:19.8px"></div><div class="cb" style="left:57px;top:5.3px;height:9.5px;background:#050505"><svg width="11" height="10" viewBox="0 0 11 10" ><path d="M2.4 4.8l2.2 2.2 3.4-3.6" fill="none" stroke="#fff" stroke-width="1.1" stroke-linecap="round" stroke-linejoin="round"/></svg></div><div class="c" style="left:77px;width:110px">02.02.02</div><div class="c" style="left:191px;top:-1px;width:370px;font-size:11.6px">Устройство монолитного перекрытия цокольного этажа</div><div class="c" style="left:558px;width:141px;text-align:center">21.05.2025 09:00</div><div class="c" style="left:699px;width:135px;text-align:center">25.05.2025 18:00</div></div>
<div class="row" style="top:444.80px"><div class="num">17</div><div class="bar" style="left:19px;width:9px;background:#173961"></div><div class="bar" style="left:28px;width:9px;background:#1d4b80"></div><div class="bar" style="left:37px;width:9px;background:#2259a0"></div><div class="bar" style="left:46px;width:9px;background:#2768b8"></div><div class="bar" style="left:55px;width:788px;background:#fff"></div><div class="dash-v" style="left:187px;top:0;height:19.8px"></div><div class="dash-v" style="left:558px;top:0;height:19.8px"></div><div class="dash-v" style="left:699px;top:0;height:19.8px"></div><div class="dash-v" style="left:834px;top:0;height:19.8px"></div><div class="cb" style="left:57px;top:5.3px;height:9.5px;background:#050505"><svg width="11" height="10" viewBox="0 0 11 10" ><path d="M2.4 4.8l2.2 2.2 3.4-3.6" fill="none" stroke="#fff" stroke-width="1.1" stroke-linecap="round" stroke-linejoin="round"/></svg></div><div class="c" style="left:77px;width:110px">02.02.03</div><div class="c" style="left:191px;top:-1px;width:370px;font-size:11.6px">Устройство монолитной входной лестницы</div><div class="c" style="left:558px;width:141px;text-align:center">28.05.2025 09:00</div><div class="c" style="left:699px;width:135px;text-align:center">29.05.2025 18:00</div></div>
<div class="row" style="top:464.60px"><div class="num">18</div><div class="bar" style="left:19px;width:9px;background:#173961"></div><div class="bar" style="left:28px;width:9px;background:#1d4b80"></div><div class="bar" style="left:37px;width:9px;background:#2259a0"></div><div class="bar" style="left:46px;width:797px;background:#2768b8"></div><div class="a" style="left:46px;top:-0.5px;width:797px;height:1px;background:rgba(255,255,255,0.14)"></div><div class="a" style="left:834px;top:0;width:1px;height:100%;background:rgba(255,255,255,0.13)"></div><div class="a" style="left:46px;top:9px;width:10px;height:2px;background:#fff"></div><div class="cb" style="left:57px;top:4.9px;background:#fff"><svg width="11" height="10" viewBox="0 0 11 10" ><path d="M2.4 4.9l2.3 2.3 3.6-3.7" fill="none" stroke="#2768b8" stroke-width="1.1" stroke-linecap="round" stroke-linejoin="round"/></svg></div><div class="c g" style="left:77px;width:110px;font-size:10.4px">OP_syn.1.1.2.1.2.03</div><div class="c g" style="left:191px;width:370px;font-size:10.95px">Монолитные работы надземной части</div><div class="c g" style="left:558px;width:141px;text-align:center;font-size:11.4px">26.05.2025 09:00</div><div class="c g" style="left:699px;width:135px;text-align:center;font-size:11.4px">21.06.2025 18:00</div></div>
<div class="row" style="top:484.40px"><div class="num">19</div><div class="bar" style="left:19px;width:9px;background:#173961"></div><div class="bar" style="left:28px;width:9px;background:#1d4b80"></div><div class="bar" style="left:37px;width:9px;background:#2259a0"></div><div class="bar" style="left:46px;width:9px;background:#2768b8"></div><div class="bar" style="left:55px;width:788px;background:#fff"></div><div class="dash-v" style="left:187px;top:0;height:19.8px"></div><div class="dash-v" style="left:558px;top:0;height:19.8px"></div><div class="dash-v" style="left:699px;top:0;height:19.8px"></div><div class="dash-v" style="left:834px;top:0;height:19.8px"></div><div class="cb" style="left:57px;top:5.3px;height:9.5px;background:#050505"><svg width="11" height="10" viewBox="0 0 11 10" ><path d="M2.4 4.8l2.2 2.2 3.4-3.6" fill="none" stroke="#fff" stroke-width="1.1" stroke-linecap="round" stroke-linejoin="round"/></svg></div><div class="c" style="left:77px;width:110px">02.03.01</div><div class="c" style="left:191px;top:-1px;width:370px;font-size:11.6px">Устройство наружных монолитных стен 1-го этажа</div><div class="c" style="left:558px;width:141px;text-align:center">26.05.2025 09:00</div><div class="c" style="left:699px;width:135px;text-align:center">27.05.2025 18:00</div></div>
<div class="row" style="top:504.20px"><div class="num">20</div><div class="bar" style="left:19px;width:9px;background:#173961"></div><div class="bar" style="left:28px;width:9px;background:#1d4b80"></div><div class="bar" style="left:37px;width:9px;background:#2259a0"></div><div class="bar" style="left:46px;width:9px;background:#2768b8"></div><div class="bar" style="left:55px;width:788px;background:#fff"></div><div class="dash-v" style="left:187px;top:0;height:19.8px"></div><div class="dash-v" style="left:558px;top:0;height:19.8px"></div><div class="dash-v" style="left:699px;top:0;height:19.8px"></div><div class="dash-v" style="left:834px;top:0;height:19.8px"></div><div class="cb" style="left:57px;top:5.3px;height:9.5px;background:#050505"><svg width="11" height="10" viewBox="0 0 11 10" ><path d="M2.4 4.8l2.2 2.2 3.4-3.6" fill="none" stroke="#fff" stroke-width="1.1" stroke-linecap="round" stroke-linejoin="round"/></svg></div><div class="c" style="left:77px;width:110px">02.03.02</div><div class="c" style="left:191px;top:-1px;width:370px;font-size:11.6px">Устройство внутренних монолитных стен 1-го этажа</div><div class="c" style="left:558px;width:141px;text-align:center">26.05.2025 09:00</div><div class="c" style="left:699px;width:135px;text-align:center">27.05.2025 18:00</div></div>
<div class="row" style="top:524.00px"><div class="num">21</div><div class="bar" style="left:19px;width:9px;background:#173961"></div><div class="bar" style="left:28px;width:9px;background:#1d4b80"></div><div class="bar" style="left:37px;width:9px;background:#2259a0"></div><div class="bar" style="left:46px;width:9px;background:#2768b8"></div><div class="bar" style="left:55px;width:788px;background:#fff"></div><div class="dash-v" style="left:187px;top:0;height:19.8px"></div><div class="dash-v" style="left:558px;top:0;height:19.8px"></div><div class="dash-v" style="left:699px;top:0;height:19.8px"></div><div class="dash-v" style="left:834px;top:0;height:19.8px"></div><div class="cb" style="left:57px;top:5.3px;height:9.5px;background:#050505"><svg width="11" height="10" viewBox="0 0 11 10" ><path d="M2.4 4.8l2.2 2.2 3.4-3.6" fill="none" stroke="#fff" stroke-width="1.1" stroke-linecap="round" stroke-linejoin="round"/></svg></div><div class="c" style="left:77px;width:110px">02.03.03</div><div class="c" style="left:191px;top:-1px;width:370px;font-size:11.6px">Устройство монолитной лестницы 1-го этажа</div><div class="c" style="left:558px;width:141px;text-align:center">28.05.2025 09:00</div><div class="c" style="left:699px;width:135px;text-align:center">02.06.2025 18:00</div></div>
<div class="row" style="top:543.80px"><div class="num">22</div><div class="bar" style="left:19px;width:9px;background:#173961"></div><div class="bar" style="left:28px;width:9px;background:#1d4b80"></div><div class="bar" style="left:37px;width:9px;background:#2259a0"></div><div class="bar" style="left:46px;width:9px;background:#2768b8"></div><div class="bar" style="left:55px;width:788px;background:#fff"></div><div class="dash-v" style="left:187px;top:0;height:19.8px"></div><div class="dash-v" style="left:558px;top:0;height:19.8px"></div><div class="dash-v" style="left:699px;top:0;height:19.8px"></div><div class="dash-v" style="left:834px;top:0;height:19.8px"></div><div class="cb" style="left:57px;top:5.3px;height:9.5px;background:#050505"><svg width="11" height="10" viewBox="0 0 11 10" ><path d="M2.4 4.8l2.2 2.2 3.4-3.6" fill="none" stroke="#fff" stroke-width="1.1" stroke-linecap="round" stroke-linejoin="round"/></svg></div><div class="c" style="left:77px;width:110px">02.03.04</div><div class="c" style="left:191px;top:-1px;width:370px;font-size:11.6px">Устройство монолитного перекрытия 1-го этажа</div><div class="c" style="left:558px;width:141px;text-align:center">03.06.2025 09:00</div><div class="c" style="left:699px;width:135px;text-align:center">05.06.2025 18:00</div></div>
<div class="row" style="top:563.60px"><div class="num">23</div><div class="bar" style="left:19px;width:9px;background:#173961"></div><div class="bar" style="left:28px;width:9px;background:#1d4b80"></div><div class="bar" style="left:37px;width:9px;background:#2259a0"></div><div class="bar" style="left:46px;width:9px;background:#2768b8"></div><div class="bar" style="left:55px;width:788px;background:#fff"></div><div class="dash-v" style="left:187px;top:0;height:19.8px"></div><div class="dash-v" style="left:558px;top:0;height:19.8px"></div><div class="dash-v" style="left:699px;top:0;height:19.8px"></div><div class="dash-v" style="left:834px;top:0;height:19.8px"></div><div class="cb" style="left:57px;top:5.3px;height:9.5px;background:#050505"><svg width="11" height="10" viewBox="0 0 11 10" ><path d="M2.4 4.8l2.2 2.2 3.4-3.6" fill="none" stroke="#fff" stroke-width="1.1" stroke-linecap="round" stroke-linejoin="round"/></svg></div><div class="c" style="left:77px;width:110px">02.03.05</div><div class="c" style="left:191px;top:-1px;width:370px;font-size:11.6px">Устройство наружных монолитных стен 2-го этажа</div><div class="c" style="left:558px;width:141px;text-align:center">06.06.2025 09:00</div><div class="c" style="left:699px;width:135px;text-align:center">07.06.2025 18:00</div></div>
<div class="row" style="top:583.40px"><div class="num">24</div><div class="bar" style="left:19px;width:9px;background:#173961"></div><div class="bar" style="left:28px;width:9px;background:#1d4b80"></div><div class="bar" style="left:37px;width:9px;background:#2259a0"></div><div class="bar" style="left:46px;width:9px;background:#2768b8"></div><div class="bar" style="left:55px;width:788px;background:#fff"></div><div class="dash-v" style="left:187px;top:0;height:19.8px"></div><div class="dash-v" style="left:558px;top:0;height:19.8px"></div><div class="dash-v" style="left:699px;top:0;height:19.8px"></div><div class="dash-v" style="left:834px;top:0;height:19.8px"></div><div class="cb" style="left:57px;top:5.3px;height:9.5px;background:#050505"><svg width="11" height="10" viewBox="0 0 11 10" ><path d="M2.4 4.8l2.2 2.2 3.4-3.6" fill="none" stroke="#fff" stroke-width="1.1" stroke-linecap="round" stroke-linejoin="round"/></svg></div><div class="c" style="left:77px;width:110px">02.03.06</div><div class="c" style="left:191px;top:-1px;width:370px;font-size:11.6px">Устройство внутренних монолитных стен 2-го этажа</div><div class="c" style="left:558px;width:141px;text-align:center">06.06.2025 09:00</div><div class="c" style="left:699px;width:135px;text-align:center">07.06.2025 18:00</div></div>
<div class="row" style="top:603.20px"><div class="num">25</div><div class="bar" style="left:19px;width:9px;background:#173961"></div><div class="bar" style="left:28px;width:9px;background:#1d4b80"></div><div class="bar" style="left:37px;width:9px;background:#2259a0"></div><div class="bar" style="left:46px;width:9px;background:#2768b8"></div><div class="bar" style="left:55px;width:788px;background:#fff"></div><div class="dash-v" style="left:187px;top:0;height:19.8px"></div><div class="dash-v" style="left:558px;top:0;height:19.8px"></div><div class="dash-v" style="left:699px;top:0;height:19.8px"></div><div class="dash-v" style="left:834px;top:0;height:19.8px"></div><div class="cb" style="left:57px;top:5.3px;height:9.5px;background:#050505"><svg width="11" height="10" viewBox="0 0 11 10" ><path d="M2.4 4.8l2.2 2.2 3.4-3.6" fill="none" stroke="#fff" stroke-width="1.1" stroke-linecap="round" stroke-linejoin="round"/></svg></div><div class="c" style="left:77px;width:110px">02.03.07</div><div class="c" style="left:191px;top:-1px;width:370px;font-size:11.6px">Устройство монолитной лестницы 2-го этажа</div><div class="c" style="left:558px;width:141px;text-align:center">08.06.2025 09:00</div><div class="c" style="left:699px;width:135px;text-align:center">13.06.2025 18:00</div></div>
<div class="row" style="top:623.00px"><div class="num">26</div><div class="bar" style="left:19px;width:9px;background:#173961"></div><div class="bar" style="left:28px;width:9px;background:#1d4b80"></div><div class="bar" style="left:37px;width:9px;background:#2259a0"></div><div class="bar" style="left:46px;width:9px;background:#2768b8"></div><div class="bar" style="left:55px;width:788px;background:#fff"></div><div class="dash-v" style="left:187px;top:0;height:19.8px"></div><div class="dash-v" style="left:558px;top:0;height:19.8px"></div><div class="dash-v" style="left:699px;top:0;height:19.8px"></div><div class="dash-v" style="left:834px;top:0;height:19.8px"></div><div class="cb" style="left:57px;top:5.3px;height:9.5px;background:#050505"><svg width="11" height="10" viewBox="0 0 11 10" ><path d="M2.4 4.8l2.2 2.2 3.4-3.6" fill="none" stroke="#fff" stroke-width="1.1" stroke-linecap="round" stroke-linejoin="round"/></svg></div><div class="c" style="left:77px;width:110px">02.03.08</div><div class="c" style="left:191px;top:-1px;width:370px;font-size:11.6px">Устройство монолитного перекрытия 2-го этажа</div><div class="c" style="left:558px;width:141px;text-align:center">14.06.2025 09:00</div><div class="c" style="left:699px;width:135px;text-align:center">16.06.2025 18:00</div></div>
<div class="row" style="top:642.80px"><div class="num">27</div><div class="bar" style="left:19px;width:9px;background:#173961"></div><div class="bar" style="left:28px;width:9px;background:#1d4b80"></div><div class="bar" style="left:37px;width:9px;background:#2259a0"></div><div class="bar" style="left:46px;width:9px;background:#2768b8"></div><div class="bar" style="left:55px;width:788px;background:#fff"></div><div class="dash-v" style="left:187px;top:0;height:19.8px"></div><div class="dash-v" style="left:558px;top:0;height:19.8px"></div><div class="dash-v" style="left:699px;top:0;height:19.8px"></div><div class="dash-v" style="left:834px;top:0;height:19.8px"></div><div class="cb" style="left:57px;top:5.3px;height:9.5px;background:#050505"><svg width="11" height="10" viewBox="0 0 11 10" ><path d="M2.4 4.8l2.2 2.2 3.4-3.6" fill="none" stroke="#fff" stroke-width="1.1" stroke-linecap="round" stroke-linejoin="round"/></svg></div><div class="c" style="left:77px;width:110px">02.03.09</div><div class="c" style="left:191px;top:-1px;width:370px;font-size:11.6px">Устройство наружных монолитных стен 3-го этажа</div><div class="c" style="left:558px;width:141px;text-align:center">17.06.2025 09:00</div><div class="c" style="left:699px;width:135px;text-align:center">18.06.2025 18:00</div></div>
<div class="row" style="top:662.60px"><div class="num">28</div><div class="bar" style="left:19px;width:9px;background:#173961"></div><div class="bar" style="left:28px;width:9px;background:#1d4b80"></div><div class="bar" style="left:37px;width:9px;background:#2259a0"></div><div class="bar" style="left:46px;width:9px;background:#2768b8"></div><div class="bar" style="left:55px;width:788px;background:#fff"></div><div class="dash-v" style="left:187px;top:0;height:19.8px"></div><div class="dash-v" style="left:558px;top:0;height:19.8px"></div><div class="dash-v" style="left:699px;top:0;height:19.8px"></div><div class="dash-v" style="left:834px;top:0;height:19.8px"></div><div class="cb" style="left:57px;top:5.3px;height:9.5px;background:#050505"><svg width="11" height="10" viewBox="0 0 11 10" ><path d="M2.4 4.8l2.2 2.2 3.4-3.6" fill="none" stroke="#fff" stroke-width="1.1" stroke-linecap="round" stroke-linejoin="round"/></svg></div><div class="c" style="left:77px;width:110px">02.03.10</div><div class="c" style="left:191px;top:-1px;width:370px;font-size:11.6px">Устройство монолитного перекрытия 3-го этажа</div><div class="c" style="left:558px;width:141px;text-align:center">19.06.2025 09:00</div><div class="c" style="left:699px;width:135px;text-align:center">21.06.2025 18:00</div></div>
<div class="row" style="top:682.40px"><div class="num">29</div><div class="bar" style="left:19px;width:9px;background:#173961"></div><div class="bar" style="left:28px;width:9px;background:#1d4b80"></div><div class="bar" style="left:37px;width:9px;background:#2259a0"></div><div class="bar" style="left:46px;width:797px;background:#2768b8"></div><div class="a" style="left:46px;top:-0.5px;width:797px;height:1px;background:rgba(255,255,255,0.14)"></div><div class="a" style="left:834px;top:0;width:1px;height:100%;background:rgba(255,255,255,0.13)"></div><div class="a" style="left:46px;top:9px;width:10px;height:2px;background:#fff"></div><div class="cb" style="left:57px;top:4.9px;background:#fff"><svg width="11" height="10" viewBox="0 0 11 10" ><path d="M2.4 4.9l2.3 2.3 3.6-3.7" fill="none" stroke="#2768b8" stroke-width="1.1" stroke-linecap="round" stroke-linejoin="round"/></svg></div><div class="c g" style="left:77px;width:110px;font-size:10.4px">OP_syn.1.1.2.1.2.04</div><div class="c g" style="left:191px;width:370px;font-size:10.95px">Кладочные работы надземной части</div><div class="c g" style="left:558px;width:141px;text-align:center;font-size:11.4px">23.06.2025 09:00</div><div class="c g" style="left:699px;width:135px;text-align:center;font-size:11.4px">29.06.2025 18:00</div></div>
<div class="row" style="top:702.20px"><div class="num">30</div><div class="bar" style="left:19px;width:9px;background:#173961"></div><div class="bar" style="left:28px;width:9px;background:#1d4b80"></div><div class="bar" style="left:37px;width:9px;background:#2259a0"></div><div class="bar" style="left:46px;width:9px;background:#2768b8"></div><div class="bar" style="left:55px;width:788px;background:#fff"></div><div class="dash-v" style="left:187px;top:0;height:19.8px"></div><div class="dash-v" style="left:558px;top:0;height:19.8px"></div><div class="dash-v" style="left:699px;top:0;height:19.8px"></div><div class="dash-v" style="left:834px;top:0;height:19.8px"></div><div class="cb" style="left:57px;top:5.3px;height:9.5px;background:#050505"><svg width="11" height="10" viewBox="0 0 11 10" ><path d="M2.4 4.8l2.2 2.2 3.4-3.6" fill="none" stroke="#fff" stroke-width="1.1" stroke-linecap="round" stroke-linejoin="round"/></svg></div><div class="c" style="left:77px;width:110px">02.04.01</div><div class="c" style="left:191px;top:-1px;width:370px;font-size:11.6px">Устройство внешних наружных кирпичных стен 1-го этажа</div><div class="c" style="left:558px;width:141px;text-align:center">23.06.2025 09:00</div><div class="c" style="left:699px;width:135px;text-align:center">27.06.2025 18:00</div></div>
<div class="row" style="top:722.00px"><div class="num">31</div><div class="bar" style="left:19px;width:9px;background:#173961"></div><div class="bar" style="left:28px;width:9px;background:#1d4b80"></div><div class="bar" style="left:37px;width:9px;background:#2259a0"></div><div class="bar" style="left:46px;width:9px;background:#2768b8"></div><div class="bar" style="left:55px;width:788px;background:#fff"></div><div class="dash-v" style="left:187px;top:0;height:19.8px"></div><div class="dash-v" style="left:558px;top:0;height:19.8px"></div><div class="dash-v" style="left:699px;top:0;height:19.8px"></div><div class="dash-v" style="left:834px;top:0;height:19.8px"></div><div class="cb" style="left:57px;top:5.3px;height:9.5px;background:#050505"><svg width="11" height="10" viewBox="0 0 11 10" ><path d="M2.4 4.8l2.2 2.2 3.4-3.6" fill="none" stroke="#fff" stroke-width="1.1" stroke-linecap="round" stroke-linejoin="round"/></svg></div><div class="c" style="left:77px;width:110px">02.04.02</div><div class="c" style="left:191px;top:-1px;width:370px;font-size:11.6px">Устройство кирпичных перегородок 1-го этажа</div><div class="c" style="left:558px;width:141px;text-align:center">23.06.2025 09:00</div><div class="c" style="left:699px;width:135px;text-align:center">24.06.2025 18:00</div></div>
<div class="row" style="top:741.80px"><div class="num">32</div><div class="bar" style="left:19px;width:9px;background:#173961"></div><div class="bar" style="left:28px;width:9px;background:#1d4b80"></div><div class="bar" style="left:37px;width:9px;background:#2259a0"></div><div class="bar" style="left:46px;width:9px;background:#2768b8"></div><div class="bar" style="left:55px;width:788px;background:#fff"></div><div class="dash-v" style="left:187px;top:0;height:19.8px"></div><div class="dash-v" style="left:558px;top:0;height:19.8px"></div><div class="dash-v" style="left:699px;top:0;height:19.8px"></div><div class="dash-v" style="left:834px;top:0;height:19.8px"></div><div class="cb" style="left:57px;top:5.3px;height:9.5px;background:#050505"><svg width="11" height="10" viewBox="0 0 11 10" ><path d="M2.4 4.8l2.2 2.2 3.4-3.6" fill="none" stroke="#fff" stroke-width="1.1" stroke-linecap="round" stroke-linejoin="round"/></svg></div><div class="c" style="left:77px;width:110px">02.04.03</div><div class="c" style="left:191px;top:-1px;width:370px;font-size:11.6px">Устройство внешних наружных кирпичных стен 2-го этажа</div><div class="c" style="left:558px;width:141px;text-align:center">28.06.2025 09:00</div><div class="c" style="left:699px;width:135px;text-align:center">29.06.2025 18:00</div></div>
<div class="row" style="top:761.60px"><div class="num">33</div><div class="bar" style="left:19px;width:9px;background:#173961"></div><div class="bar" style="left:28px;width:9px;background:#1d4b80"></div><div class="bar" style="left:37px;width:9px;background:#2259a0"></div><div class="bar" style="left:46px;width:9px;background:#2768b8"></div><div class="bar" style="left:55px;width:788px;background:#fff"></div><div class="dash-v" style="left:187px;top:0;height:19.8px"></div><div class="dash-v" style="left:558px;top:0;height:19.8px"></div><div class="dash-v" style="left:699px;top:0;height:19.8px"></div><div class="dash-v" style="left:834px;top:0;height:19.8px"></div><div class="cb" style="left:57px;top:5.3px;height:9.5px;background:#050505"><svg width="11" height="10" viewBox="0 0 11 10" ><path d="M2.4 4.8l2.2 2.2 3.4-3.6" fill="none" stroke="#fff" stroke-width="1.1" stroke-linecap="round" stroke-linejoin="round"/></svg></div><div class="c" style="left:77px;width:110px">02.04.04</div><div class="c" style="left:191px;top:-1px;width:370px;font-size:11.6px">Устройство кирпичных перегородок 2-го этажа</div><div class="c" style="left:558px;width:141px;text-align:center">28.06.2025 09:00</div><div class="c" style="left:699px;width:135px;text-align:center">29.06.2025 18:00</div></div>
<div class="row" style="top:781.40px"><div class="num">34</div><div class="bar" style="left:19px;width:9px;background:#173961"></div><div class="bar" style="left:28px;width:9px;background:#1d4b80"></div><div class="bar" style="left:37px;width:9px;background:#2259a0"></div><div class="bar" style="left:46px;width:9px;background:#2768b8"></div><div class="bar" style="left:55px;width:788px;background:#fff"></div><div class="dash-v" style="left:187px;top:0;height:19.8px"></div><div class="dash-v" style="left:558px;top:0;height:19.8px"></div><div class="dash-v" style="left:699px;top:0;height:19.8px"></div><div class="dash-v" style="left:834px;top:0;height:19.8px"></div><div class="cb" style="left:57px;top:5.3px;height:9.5px;background:#050505"><svg width="11" height="10" viewBox="0 0 11 10" ><path d="M2.4 4.8l2.2 2.2 3.4-3.6" fill="none" stroke="#fff" stroke-width="1.1" stroke-linecap="round" stroke-linejoin="round"/></svg></div><div class="c" style="left:77px;width:110px">02.04.05</div><div class="c" style="left:191px;top:-1px;width:370px;font-size:11.6px">Устройство внешних наружных кирпичных стен 3-го этажа</div><div class="c" style="left:558px;width:141px;text-align:center">23.06.2025 09:00</div><div class="c" style="left:699px;width:135px;text-align:center">24.06.2025 18:00</div></div>
<div class="row" style="top:801.20px"><div class="num">35</div><div class="bar" style="left:19px;width:9px;background:#173961"></div><div class="bar" style="left:28px;width:9px;background:#1d4b80"></div><div class="bar" style="left:37px;width:9px;background:#2259a0"></div><div class="bar" style="left:46px;width:797px;background:#2768b8"></div><div class="a" style="left:46px;top:-0.5px;width:797px;height:1px;background:rgba(255,255,255,0.14)"></div><div class="a" style="left:834px;top:0;width:1px;height:100%;background:rgba(255,255,255,0.13)"></div><div class="a" style="left:46px;top:9px;width:10px;height:2px;background:#fff"></div><div class="cb" style="left:57px;top:4.9px;background:#fff"><svg width="11" height="10" viewBox="0 0 11 10" ><path d="M2.4 4.9l2.3 2.3 3.6-3.7" fill="none" stroke="#2768b8" stroke-width="1.1" stroke-linecap="round" stroke-linejoin="round"/></svg></div><div class="c g" style="left:77px;width:110px;font-size:10.4px">OP_syn.1.1.2.1.2.05</div><div class="c g" style="left:191px;width:370px;font-size:10.95px">Фасадные работы</div><div class="c g" style="left:558px;width:141px;text-align:center;font-size:11.4px">25.06.2025 09:00</div><div class="c g" style="left:699px;width:135px;text-align:center;font-size:11.4px">21.07.2025 18:00</div></div>
<div class="row" style="top:821.00px"><div class="num">36</div><div class="bar" style="left:19px;width:9px;background:#173961"></div><div class="bar" style="left:28px;width:9px;background:#1d4b80"></div><div class="bar" style="left:37px;width:9px;background:#2259a0"></div><div class="bar" style="left:46px;width:9px;background:#2768b8"></div><div class="bar" style="left:55px;width:788px;background:#fff"></div><div class="dash-v" style="left:187px;top:0;height:19.8px"></div><div class="dash-v" style="left:558px;top:0;height:19.8px"></div><div class="dash-v" style="left:699px;top:0;height:19.8px"></div><div class="dash-v" style="left:834px;top:0;height:19.8px"></div><div class="cb" style="left:57px;top:5.3px;height:9.5px;background:#050505"><svg width="11" height="10" viewBox="0 0 11 10" ><path d="M2.4 4.8l2.2 2.2 3.4-3.6" fill="none" stroke="#fff" stroke-width="1.1" stroke-linecap="round" stroke-linejoin="round"/></svg></div><div class="c" style="left:77px;width:110px">02.05.01</div><div class="c" style="left:191px;top:-1px;width:370px;font-size:11.6px">Устройство утеплителя стен цокольного этажа (ППУ)</div><div class="c" style="left:558px;width:141px;text-align:center">30.06.2025 09:00</div><div class="c" style="left:699px;width:135px;text-align:center">01.07.2025 18:00</div></div>
<div class="row" style="top:840.80px"><div class="num">37</div><div class="bar" style="left:19px;width:9px;background:#173961"></div><div class="bar" style="left:28px;width:9px;background:#1d4b80"></div><div class="bar" style="left:37px;width:9px;background:#2259a0"></div><div class="bar" style="left:46px;width:9px;background:#2768b8"></div><div class="bar" style="left:55px;width:788px;background:#fff"></div><div class="dash-v" style="left:187px;top:0;height:19.8px"></div><div class="dash-v" style="left:558px;top:0;height:19.8px"></div><div class="dash-v" style="left:699px;top:0;height:19.8px"></div><div class="dash-v" style="left:834px;top:0;height:19.8px"></div><div class="cb" style="left:57px;top:5.3px;height:9.5px;background:#050505"><svg width="11" height="10" viewBox="0 0 11 10" ><path d="M2.4 4.8l2.2 2.2 3.4-3.6" fill="none" stroke="#fff" stroke-width="1.1" stroke-linecap="round" stroke-linejoin="round"/></svg></div><div class="c" style="left:77px;width:110px">02.05.02</div><div class="c" style="left:191px;top:-1px;width:370px;font-size:11.6px">Устройство утеплителя наружных стен 1 этажа (базальт)</div><div class="c" style="left:558px;width:141px;text-align:center">30.06.2025 09:00</div><div class="c" style="left:699px;width:135px;text-align:center">02.07.2025 18:00</div></div>
<div class="row" style="top:860.60px"><div class="num">38</div><div class="bar" style="left:19px;width:9px;background:#173961"></div><div class="bar" style="left:28px;width:9px;background:#1d4b80"></div><div class="bar" style="left:37px;width:9px;background:#2259a0"></div><div class="bar" style="left:46px;width:9px;background:#2768b8"></div><div class="bar" style="left:55px;width:788px;background:#fff"></div><div class="dash-v" style="left:187px;top:0;height:19.8px"></div><div class="dash-v" style="left:558px;top:0;height:19.8px"></div><div class="dash-v" style="left:699px;top:0;height:19.8px"></div><div class="dash-v" style="left:834px;top:0;height:19.8px"></div><div class="cb" style="left:57px;top:5.3px;height:9.5px;background:#050505"><svg width="11" height="10" viewBox="0 0 11 10" ><path d="M2.4 4.8l2.2 2.2 3.4-3.6" fill="none" stroke="#fff" stroke-width="1.1" stroke-linecap="round" stroke-linejoin="round"/></svg></div><div class="c" style="left:77px;width:110px">02.05.03</div><div class="c" style="left:191px;top:-1px;width:370px;font-size:11.6px">Устройство утеплителя наружных стен 2 этажа (базальт)</div><div class="c" style="left:558px;width:141px;text-align:center">30.06.2025 09:00</div><div class="c" style="left:699px;width:135px;text-align:center">02.07.2025 18:00</div></div>
<div class="row" style="top:880.40px"><div class="num">39</div><div class="bar" style="left:19px;width:9px;background:#173961"></div><div class="bar" style="left:28px;width:9px;background:#1d4b80"></div><div class="bar" style="left:37px;width:9px;background:#2259a0"></div><div class="bar" style="left:46px;width:9px;background:#2768b8"></div><div class="bar" style="left:55px;width:788px;background:#fff"></div><div class="dash-v" style="left:187px;top:0;height:19.8px"></div><div class="dash-v" style="left:558px;top:0;height:19.8px"></div><div class="dash-v" style="left:699px;top:0;height:19.8px"></div><div class="dash-v" style="left:834px;top:0;height:19.8px"></div><div class="cb" style="left:57px;top:5.3px;height:9.5px;background:#050505"><svg width="11" height="10" viewBox="0 0 11 10" ><path d="M2.4 4.8l2.2 2.2 3.4-3.6" fill="none" stroke="#fff" stroke-width="1.1" stroke-linecap="round" stroke-linejoin="round"/></svg></div><div class="c" style="left:77px;width:110px">02.05.04</div><div class="c" style="left:191px;top:-1px;width:370px;font-size:11.6px">Устройство утеплителя наружных стен 3 этажа (базальт)</div><div class="c" style="left:558px;width:141px;text-align:center">25.06.2025 09:00</div><div class="c" style="left:699px;width:135px;text-align:center">26.06.2025 18:00</div></div>
<div class="row" style="top:900.20px"><div class="num">40</div><div class="bar" style="left:19px;width:9px;background:#173961"></div><div class="bar" style="left:28px;width:9px;background:#1d4b80"></div><div class="bar" style="left:37px;width:9px;background:#2259a0"></div><div class="bar" style="left:46px;width:9px;background:#2768b8"></div><div class="bar" style="left:55px;width:788px;background:#fff"></div><div class="dash-v" style="left:187px;top:0;height:19.8px"></div><div class="dash-v" style="left:558px;top:0;height:19.8px"></div><div class="dash-v" style="left:699px;top:0;height:19.8px"></div><div class="dash-v" style="left:834px;top:0;height:19.8px"></div><div class="cb" style="left:57px;top:5.3px;height:9.5px;background:#050505"><svg width="11" height="10" viewBox="0 0 11 10" ><path d="M2.4 4.8l2.2 2.2 3.4-3.6" fill="none" stroke="#fff" stroke-width="1.1" stroke-linecap="round" stroke-linejoin="round"/></svg></div><div class="c" style="left:77px;width:110px">02.05.05</div><div class="c" style="left:191px;top:-1px;width:370px;font-size:11.6px">Облицовка фасада навесной вентилируемой системой</div><div class="c" style="left:558px;width:141px;text-align:center">09.07.2025 09:00</div><div class="c" style="left:699px;width:135px;text-align:center">04.07.2025 18:00</div></div>
<div class="dash-h" style="left:87px;top:206.30px;width:797px"></div><div class="dash-h" style="left:87px;top:226.10px;width:797px"></div><div class="dash-h" style="left:87px;top:245.90px;width:797px"></div><div class="dash-h" style="left:96px;top:305.30px;width:788px"></div><div class="dash-h" style="left:96px;top:325.10px;width:788px"></div><div class="dash-h" style="left:96px;top:344.90px;width:788px"></div><div class="dash-h" style="left:96px;top:364.70px;width:788px"></div><div class="dash-h" style="left:96px;top:384.50px;width:788px"></div><div class="dash-h" style="left:96px;top:424.10px;width:788px"></div><div class="dash-h" style="left:96px;top:443.90px;width:788px"></div><div class="dash-h" style="left:96px;top:463.70px;width:788px"></div><div class="dash-h" style="left:96px;top:503.30px;width:788px"></div><div class="dash-h" style="left:96px;top:523.10px;width:788px"></div><div class="dash-h" style="left:96px;top:542.90px;width:788px"></div><div class="dash-h" style="left:96px;top:562.70px;width:788px"></div><div class="dash-h" style="left:96px;top:582.50px;width:788px"></div><div class="dash-h" style="left:96px;top:602.30px;width:788px"></div><div class="dash-h" style="left:96px;top:622.10px;width:788px"></div><div class="dash-h" style="left:96px;top:641.90px;width:788px"></div><div class="dash-h" style="left:96px;top:661.70px;width:788px"></div><div class="dash-h" style="left:96px;top:681.50px;width:788px"></div><div class="dash-h" style="left:96px;top:721.10px;width:788px"></div><div class="dash-h" style="left:96px;top:740.90px;width:788px"></div><div class="dash-h" style="left:96px;top:760.70px;width:788px"></div><div class="dash-h" style="left:96px;top:780.50px;width:788px"></div><div class="dash-h" style="left:96px;top:800.30px;width:788px"></div><div class="dash-h" style="left:96px;top:839.90px;width:788px"></div><div class="dash-h" style="left:96px;top:859.70px;width:788px"></div><div class="dash-h" style="left:96px;top:879.50px;width:788px"></div><div class="dash-h" style="left:96px;top:899.30px;width:788px"></div><div class="dash-h" style="left:96px;top:919.10px;width:788px"></div>
<div class="a" style="left:41px;top:907.5px;width:849px;height:4px;background:#efeff2"></div>
<div class="a" style="left:895px;top:83px;width:1023px;height:828px;background:#fff"></div>
<svg class="a" style="left:0;top:0" width="1918" height="911"><path d="M1489.5 428H1503.6V365.2H1250V303.5H1256" fill="none" stroke="#c2c2c2" stroke-width="2.8"/><path d="M1254.8 297.9L1266.3 303.5L1254.8 309.1z" fill="#c2c2c2"/><path d="M1489.5 553H1503.6V490.2H1250V428.5H1256" fill="none" stroke="#c2c2c2" stroke-width="2.8"/><path d="M1254.8 422.9L1266.3 428.5L1254.8 434.1z" fill="#c2c2c2"/><path d="M1489.5 678H1503.6V615.2H1250V553.5H1256" fill="none" stroke="#c2c2c2" stroke-width="2.8"/><path d="M1254.8 547.9L1266.3 553.5L1254.8 559.1z" fill="#c2c2c2"/><path d="M1489.5 803H1503.6V740.2H1250V678.5H1256" fill="none" stroke="#c2c2c2" stroke-width="2.8"/><path d="M1254.8 672.9L1266.3 678.5L1254.8 684.1z" fill="#c2c2c2"/></svg>
<div class="node" style="left:1264.5px;top:130px;background:linear-gradient(90deg,#4f9fe8 82%,#62d8b5 91%);outline:none;box-shadow:0 0 0 3px #000;"><div class="t">Устройство буронабивных...</div><div class="k" style="top:30.3px">Шифр</div><div class="v" style="top:30.3px">02.01.03</div><div class="k" style="top:44.3px">Старт</div><div class="v" style="top:44.3px">10.05.2025 09:00</div><div class="k" style="top:58.3px">Финиш</div><div class="v" style="top:58.3px">11.05.2025 18:00</div><div class="k" style="top:72.8px">Прогресс</div><div class="v" style="top:72.8px">87</div></div>
<div class="node" style="left:1264.5px;top:255px;background:linear-gradient(90deg,#4f9fe8 18%,#62d8b5 27%);"><div class="t">Устройство буронабивных...</div><div class="k" style="top:30.3px">Шифр</div><div class="v" style="top:30.3px">02.01.02</div><div class="k" style="top:44.3px">Старт</div><div class="v" style="top:44.3px">08.05.2025 09:00</div><div class="k" style="top:58.3px">Финиш</div><div class="v" style="top:58.3px">09.05.2025 18:00</div><div class="k" style="top:72.8px">Прогресс</div><div class="v" style="top:72.8px">23</div></div>
<div class="node" style="left:1264.5px;top:380px;background:linear-gradient(90deg,#4f9fe8 49%,#62d8b5 58%);"><div class="t">Устройство буронабивных...</div><div class="k" style="top:30.3px">Шифр</div><div class="v" style="top:30.3px">02.01.01</div><div class="k" style="top:44.3px">Старт</div><div class="v" style="top:44.3px">06.05.2025 09:00</div><div class="k" style="top:58.3px">Финиш</div><div class="v" style="top:58.3px">07.05.2025 18:00</div><div class="k" style="top:72.8px">Прогресс</div><div class="v" style="top:72.8px">54</div></div>
<div class="node" style="left:1264.5px;top:505px;background:linear-gradient(90deg,#4f9fe8 60%,#62d8b5 69%);"><div class="t">Устройство песчаного...</div><div class="k" style="top:30.3px">Шифр</div><div class="v" style="top:30.3px">01.03</div><div class="k" style="top:44.3px">Старт</div><div class="v" style="top:44.3px">04.05.2025 09:00</div><div class="k" style="top:58.3px">Финиш</div><div class="v" style="top:58.3px">05.05.2025 18:00</div><div class="k" style="top:72.8px">Прогресс</div><div class="v" style="top:72.8px">65</div></div>
<div class="node" style="left:1264.5px;top:630px;background:linear-gradient(90deg,#4f9fe8 29%,#62d8b5 38%);"><div class="t">Устройство котлована</div><div class="k" style="top:30.3px">Шифр</div><div class="v" style="top:30.3px">01.02</div><div class="k" style="top:44.3px">Старт</div><div class="v" style="top:44.3px">02.05.2025 09:00</div><div class="k" style="top:58.3px">Финиш</div><div class="v" style="top:58.3px">03.05.2025 18:00</div><div class="k" style="top:72.8px">Прогресс</div><div class="v" style="top:72.8px">34</div></div>
<div class="node" style="left:1264.5px;top:755px;background:linear-gradient(90deg,#4f9fe8 16%,#62d8b5 25%);"><div class="t">Вертикальная планировка...</div><div class="k" style="top:30.3px">Шифр</div><div class="v" style="top:30.3px">01.01</div><div class="k" style="top:44.3px">Старт</div><div class="v" style="top:44.3px">29.04.2025 09:00</div><div class="k" style="top:58.3px">Финиш</div><div class="v" style="top:58.3px">01.05.2025 18:00</div><div class="k" style="top:72.8px">Прогресс</div><div class="v" style="top:72.8px">21</div></div>
<svg class="a" style="left:0;top:0" width="1918" height="911"><circle cx="1489.2" cy="428" r="5" fill="#c2c2c2"/><circle cx="1489.2" cy="553" r="5" fill="#c2c2c2"/><circle cx="1489.2" cy="678" r="5" fill="#c2c2c2"/><circle cx="1489.2" cy="803" r="5" fill="#c2c2c2"/><path d="M1489 302.5H1503.7V240.3H1250V177.9H1256" fill="none" stroke="#000" stroke-width="4"/><path d="M1254.2 171.4L1268 177.9L1254.2 184.4z" fill="#000"/><circle cx="1489.2" cy="302.5" r="6.6" fill="#000"/></svg>
<svg class="a" style="left:0;top:0" width="1918" height="911"><path d="M1822.5 151V94" stroke="#000" stroke-width="3"/><path d="M1817 95.5L1822.5 84L1828 95.5z" fill="#000"/><ellipse cx="1823.5" cy="169.6" rx="15.6" ry="17.6" fill="#fff" stroke="#000" stroke-width="3"/><text x="1823.5" y="176.8" font-family="Liberation Sans" font-size="20" text-anchor="middle" fill="#000">1</text><path d="M1561 173.4H1503" stroke="#000" stroke-width="3.1"/><path d="M1504.3 167.5L1492.9 173.4L1504.3 179.3z" fill="#000"/><ellipse cx="1576.9" cy="174" rx="15.4" ry="17.2" fill="#fff" stroke="#000" stroke-width="3"/><text x="1576.6" y="181.3" font-family="Liberation Sans" font-size="21" text-anchor="middle" fill="#000">2</text></svg>
</body></html>
